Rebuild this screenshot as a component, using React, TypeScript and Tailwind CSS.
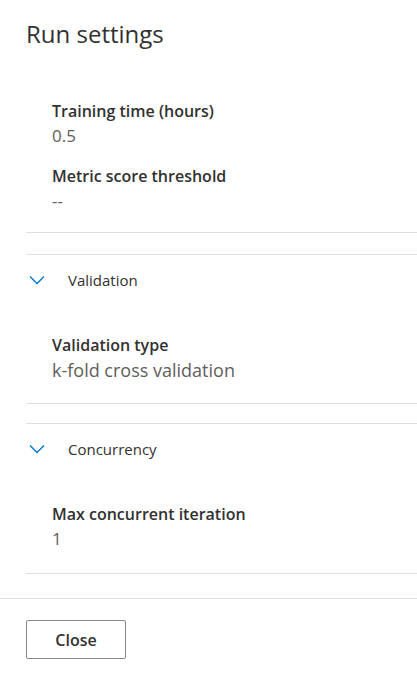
import React from "react";

type Field = {
  label: string;
  value: string;
  big?: boolean;
};

const Chevron = () => (
  <svg width="16" height="10" viewBox="0 0 16 10" className="shrink-0">
    <path d="M1 1.5 L8 8.5 L15 1.5" fill="none" stroke="#0078d4" strokeWidth="1.4" />
  </svg>
);

const FieldItem = ({ field, first }: { field: Field; first?: boolean }) => (
  <div className={first ? "" : "mt-[18px]"}>
    <div className="text-[16px] leading-[22px] font-semibold text-[#323130]">{field.label}</div>
    <div
      className={
        field.big
          ? "mt-[2px] text-[18px] leading-[24px] text-[#605e5c]"
          : "mt-[3px] text-[17px] leading-[22px] text-[#605e5c]"
      }
    >
      {field.value}
    </div>
  </div>
);

const Section = ({
  title,
  fields,
  top,
  bottom,
}: {
  title: string;
  fields: Field[];
  top: string;
  bottom: string;
}) => (
  <div className={`${top} border-t border-b border-[#e1dfdd]`}>
    <div className="flex items-center gap-[23px] pt-[14px] pl-[3px] h-[35px] text-[15px] leading-[20px] text-[#323130]">
      <Chevron />
      <span>{title}</span>
    </div>
    <div className={`pl-[26px] pt-[44px] ${bottom}`}>
      {fields.map((f, i) => (
        <FieldItem key={f.label} field={f} first={i === 0} />
      ))}
    </div>
  </div>
);

export default function App() {
  return (
    <div
      className="w-[417px] h-[678px] bg-white overflow-hidden"
      style={{ fontFamily: "'Open Sans', 'Noto Sans', sans-serif" }}
    >
      <div className="pl-[26px]">
        <h1 className="pt-[19px] h-[49px] text-[24px] leading-[30px] text-[#323130]">Run settings</h1>

        <div className="pl-[26px] pt-[51px] pb-[20px] border-b border-[#e1dfdd]">
          <FieldItem field={{ label: "Training time (hours)", value: "0.5" }} first />
          <FieldItem field={{ label: "Metric score threshold", value: "--" }} />
        </div>

        <Section
          title="Validation"
          top="mt-[21px]"
          bottom="pb-[21px]"
          fields={[{ label: "Validation type", value: "k-fold cross validation", big: true }]}
        />
        <Section
          title="Concurrency"
          top="mt-[19px]"
          bottom="pb-[23px]"
          fields={[{ label: "Max concurrent iteration", value: "1" }]}
        />
      </div>

      <div className="mt-[24px] border-t border-[#e1dfdd] pl-[26px] pt-[21px]">
        <button className="w-[100px] h-[39px] rounded-[2px] border border-[#8a8886] text-[16px] font-semibold text-[#323130]">
          Close
        </button>
      </div>
    </div>
  );
}
